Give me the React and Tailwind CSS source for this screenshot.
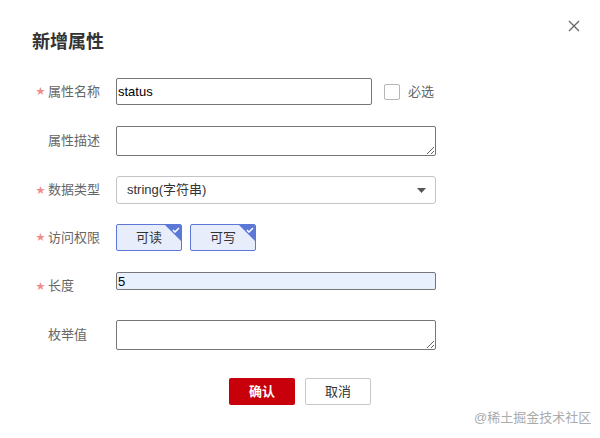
import React from "react";

const FONT = { fontFamily: '"Liberation Sans", "Noto Sans CJK SC", sans-serif' };

function Label({ required, children }) {
  return (
    <div className="flex items-center shrink-0">
      <span className="w-3 text-[9px] leading-none text-[#f08a8a]">{required ? "★" : ""}</span>
      <span className="w-[68px] text-[13px] text-[#666]">{children}</span>
    </div>
  );
}

function CheckTag({ children }) {
  return (
    <button className="relative w-[66px] h-[27px] border border-[#5b78d6] bg-[#e8edfb] rounded-[2px] text-[13px] text-[#333] overflow-hidden">
      {children}
      <span className="absolute top-0 right-0 w-0 h-0 border-t-[16px] border-l-[16px] border-t-[#5b78d6] border-l-transparent" />
      <svg className="absolute top-[2px] right-[1px]" width="8" height="6" viewBox="0 0 8 6">
        <path d="M1 3 L3 5 L7 1" stroke="white" strokeWidth="1.5" fill="none" />
      </svg>
    </button>
  );
}

export default function App() {
  return (
    <div className="w-[600px] h-[438px] bg-white relative overflow-hidden" style={FONT}>
      <div className="flex justify-between items-start pl-8 pr-[20px] pt-5">
        <h2 className="mt-[10px] text-[18px] leading-[24px] font-bold text-[#333]">新增属性</h2>
        <button className="w-[12px] h-[12px] mt-0">
          <svg width="12" height="12" viewBox="0 0 12 12">
            <path d="M1 1 L11 11 M11 1 L1 11" stroke="#666" strokeWidth="1.3" />
          </svg>
        </button>
      </div>

      <div className="pl-9 mt-[24px] flex flex-col">
        <div className="flex items-center h-[27px]">
          <Label required>属性名称</Label>
          <input
            readOnly
            value="status"
            className="w-[256px] h-[27px] border border-[#767676] rounded-[2px] px-[1px] text-[13px] text-black outline-none"
          />
          <span className="ml-3 w-4 h-4 border border-[#b5b5b5] rounded-[2px]" />
          <span className="ml-2 text-[13px] text-[#666]">必选</span>
        </div>

        <div className="flex items-center h-[30px] mt-[21px]">
          <Label>属性描述</Label>
          <textarea className="w-[320px] h-[30px] border border-[#767676] rounded-[2px] outline-none" />
        </div>

        <div className="flex items-center h-[28px] mt-[20px]">
          <Label required>数据类型</Label>
          <div className="w-[320px] h-[28px] border border-[#c4c4c4] rounded-[3px] flex items-center justify-between pl-[10px] pr-[9px]">
            <span className="text-[13px] text-[#333]">string(字符串)</span>
            <svg width="9" height="5" viewBox="0 0 9 5">
              <path d="M0 0 L9 0 L4.5 5 Z" fill="#555" />
            </svg>
          </div>
        </div>

        <div className="flex items-center h-[27px] mt-[20px]">
          <Label required>访问权限</Label>
          <div className="flex gap-2">
            <CheckTag>可读</CheckTag>
            <CheckTag>可写</CheckTag>
          </div>
        </div>

        <div className="flex items-center h-[28px] mt-[21px]">
          <Label required>长度</Label>
          <input
            readOnly
            value="5"
            className="self-start w-[320px] h-[18px] border border-[#767676] bg-[#e8f0fe] rounded-[2px] px-[1px] text-[13px] leading-none text-black outline-none"
          />
        </div>

        <div className="flex items-center h-[30px] mt-[20px]">
          <Label>枚举值</Label>
          <textarea className="w-[320px] h-[30px] border border-[#767676] rounded-[2px] outline-none" />
        </div>
      </div>

      <div className="flex justify-center gap-[10px] mt-[28px]">
        <button className="w-[66px] h-[27px] bg-[#c7000b] rounded-[2px] text-[13px] font-bold text-white">确认</button>
        <button className="w-[66px] h-[27px] bg-white border border-[#c8c8c8] rounded-[2px] text-[13px] text-[#333]">取消</button>
      </div>

      <div className="absolute left-[474px] top-[408px] text-[13px] text-[#ababab]">@稀土掘金技术社区</div>
    </div>
  );
}
